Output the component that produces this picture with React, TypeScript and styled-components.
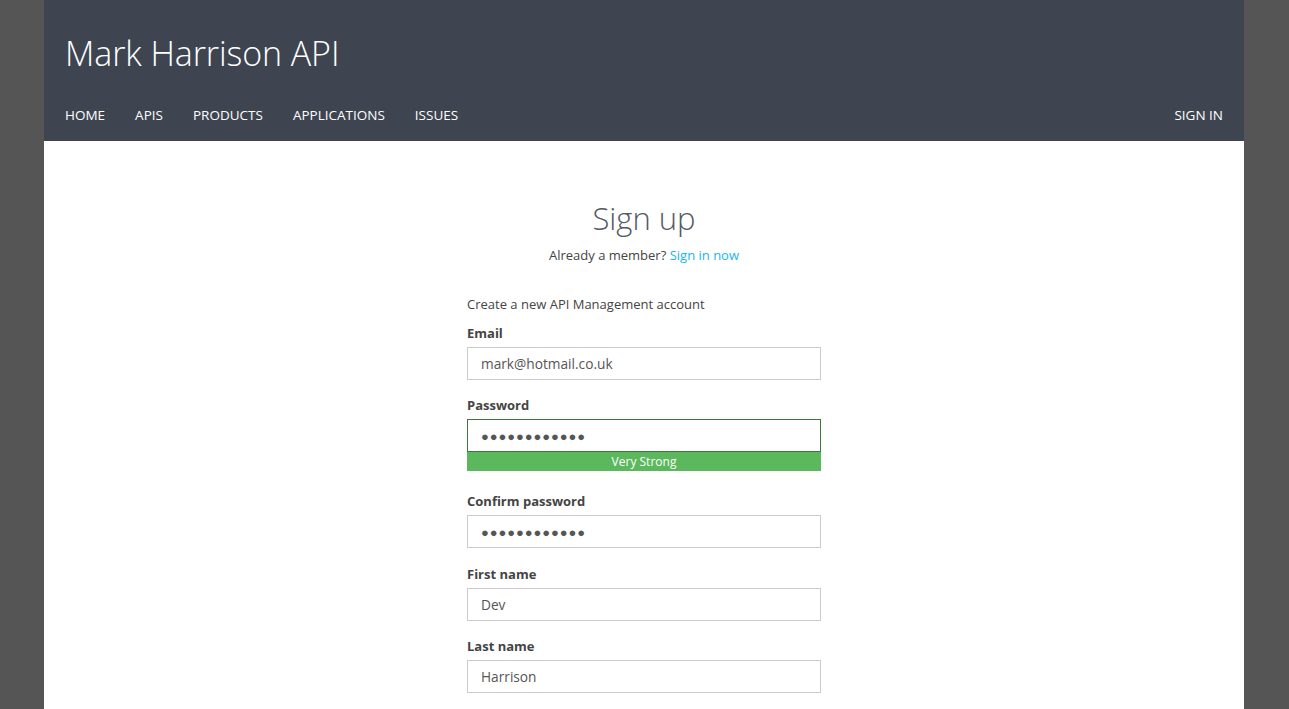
import React from "react";
import styled, { createGlobalStyle } from "styled-components";

const Global = createGlobalStyle`
  html, body { margin: 0; padding: 0; background: #555555; }
  body { font-family: "Open Sans", "Noto Sans", "Liberation Sans", sans-serif; color: #333; }
  * { box-sizing: border-box; }
`;

const Page = styled.div`
  width: 1200px;
  margin-left: 44px;
  min-height: 709px;
  background: #ffffff;
`;

const Header = styled.header`
  background: #3e4551;
  height: 141px;
  padding: 0 21px;
  display: flex;
  flex-direction: column;
`;

const Brand = styled.div`
  font-weight: 300;
  font-size: 34px;
  color: #ffffff;
  padding-top: 30px;
  line-height: 46px;
  letter-spacing: -0.1px;
`;

const NavBar = styled.nav`
  display: flex;
  align-items: center;
  margin-top: 30px;
`;

const NavList = styled.div`
  display: flex;
  gap: 30px;
  flex: 1;
`;

const NavItem = styled.a`
  color: #ffffff;
  font-size: 13.5px;
  line-height: 18px;
  text-transform: uppercase;
  text-decoration: none;
`;

const Main = styled.main`
  display: flex;
  flex-direction: column;
  align-items: center;
  padding-top: 55px;
`;

const Title = styled.h1`
  margin: 0;
  font-weight: 300;
  font-size: 31px;
  line-height: 44px;
  color: #555a63;
`;

const Sub = styled.p`
  margin: 6px 0 0;
  font-size: 13px;
  line-height: 18px;
  color: #444;
`;

const Link = styled.a`
  color: #1cb4ec;
  text-decoration: none;
`;

const Form = styled.form`
  width: 354px;
  margin-top: 31px;
  display: flex;
  flex-direction: column;
`;

const Intro = styled.div`
  font-size: 13px;
  line-height: 18px;
  color: #444;
  margin-bottom: 11px;
`;

const Field = styled.div<{ $after?: number }>`
  display: flex;
  flex-direction: column;
  margin-bottom: ${(p) => p.$after ?? 16}px;
`;

const Label = styled.label`
  font-size: 13px;
  font-weight: 700;
  line-height: 18px;
  color: #444;
  margin-bottom: 5px;
`;

const Input = styled.div<{ $focus?: boolean; $dots?: boolean }>`
  height: 33px;
  border: 1px solid ${(p) => (p.$focus ? "#3a7a3c" : "#cccccc")};
  padding: 0 13px;
  display: flex;
  align-items: center;
  font-size: ${(p) => (p.$dots ? "13px" : "13.7px")};
  letter-spacing: ${(p) => (p.$dots ? "0.9px" : "0")};
  color: #555;
  background: #fff;
`;

const Strength = styled.div`
  height: 19px;
  background: #5cb85c;
  color: #ffffff;
  font-size: 12px;
  line-height: 19px;
  text-align: center;
`;

const dots = "●●●●●●●●●●●●";

export default function App() {
  return (
    <>
      <Global />
      <Page>
        <Header>
          <Brand>Mark Harrison API</Brand>
          <NavBar>
            <NavList>
              <NavItem>Home</NavItem>
              <NavItem>APIs</NavItem>
              <NavItem>Products</NavItem>
              <NavItem>Applications</NavItem>
              <NavItem>Issues</NavItem>
            </NavList>
            <NavItem>Sign in</NavItem>
          </NavBar>
        </Header>
        <Main>
          <Title>Sign up</Title>
          <Sub>
            Already a member? <Link>Sign in now</Link>
          </Sub>
          <Form>
            <Intro>Create a new API Management account</Intro>
            <Field>
              <Label>Email</Label>
              <Input>mark@hotmail.co.uk</Input>
            </Field>
            <Field $after={21}>
              <Label>Password</Label>
              <Input $focus $dots>{dots}</Input>
              <Strength>Very Strong</Strength>
            </Field>
            <Field $after={17}>
              <Label>Confirm password</Label>
              <Input $dots>{dots}</Input>
            </Field>
            <Field>
              <Label>First name</Label>
              <Input>Dev</Input>
            </Field>
            <Field>
              <Label>Last name</Label>
              <Input>Harrison</Input>
            </Field>
          </Form>
        </Main>
      </Page>
    </>
  );
}
